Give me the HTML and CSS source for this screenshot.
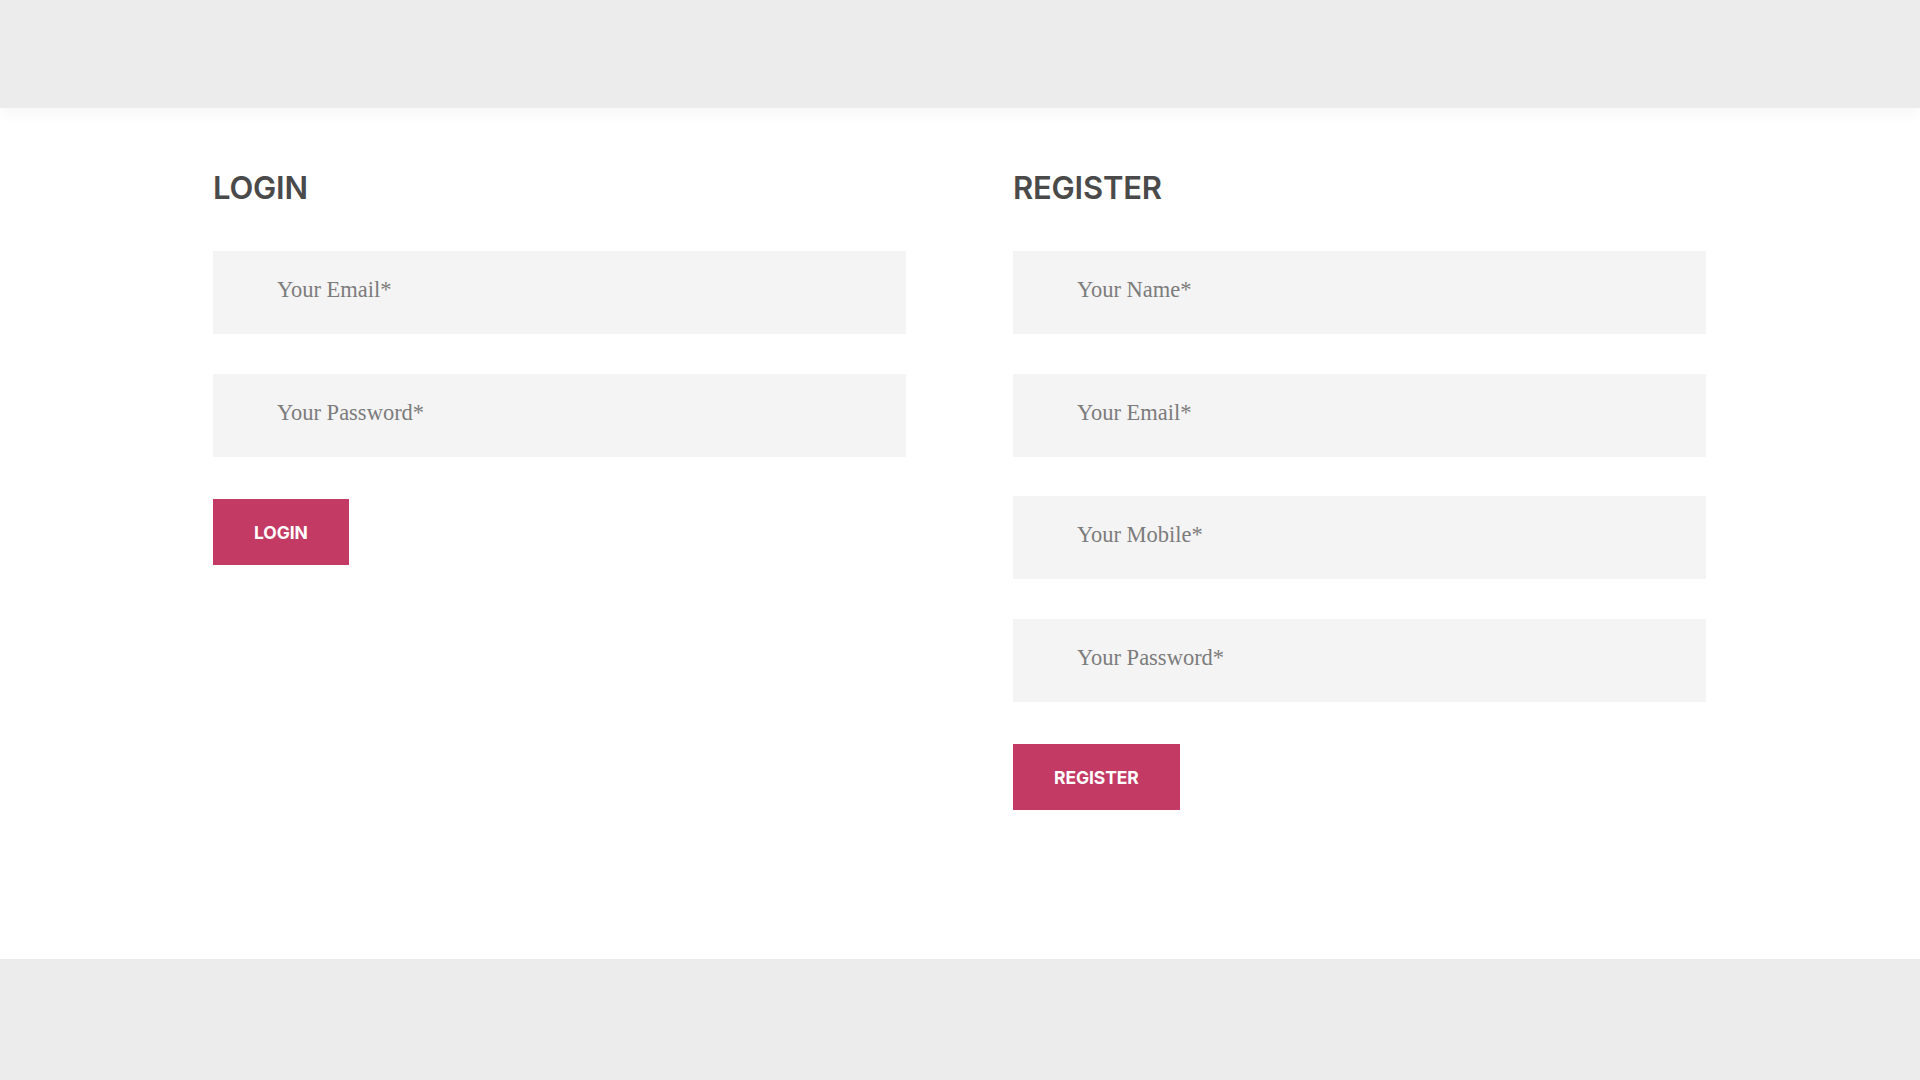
FILE: index.html
```html
<!DOCTYPE html>
<html lang="en">
<head>
<meta charset="utf-8">
<title>Login / Register</title>
<link rel="stylesheet" href="styles.css">
</head>
<body>
<header class="topbar"></header>
<main class="account">
  <div class="account-inner">
    <section class="panel">
      <h2 class="panel-title">LOGIN</h2>
      <form class="panel-form">
        <input class="field" type="email" placeholder="Your Email*">
        <input class="field" type="password" placeholder="Your Password*">
        <button class="btn" type="button">LOGIN</button>
      </form>
    </section>
    <section class="panel">
      <h2 class="panel-title">REGISTER</h2>
      <form class="panel-form">
        <input class="field" type="text" placeholder="Your Name*">
        <input class="field" type="email" placeholder="Your Email*">
        <input class="field" type="tel" placeholder="Your Mobile*">
        <input class="field" type="password" placeholder="Your Password*">
        <button class="btn" type="button">REGISTER</button>
      </form>
    </section>
  </div>
</main>
<footer class="bottombar"></footer>
</body>
</html>
```
FILE: styles.css
```css
* { box-sizing: border-box; }
html, body { margin: 0; padding: 0; }
body {
  background: #ffffff;
  font-family: "Inter", "Liberation Sans", sans-serif;
}
.topbar {
  height: 108px;
  background: #ececec;
  box-shadow: 0 6px 14px rgba(0, 0, 0, 0.035);
  position: relative;
  z-index: 1;
}
.account {
  height: 851px;
  background: #ffffff;
  padding-top: 62px;
}
.account-inner {
  width: 1494px;
  margin: 0 auto;
  display: flex;
  gap: 107px;
}
.panel {
  width: 693px;
}
.panel-title {
  margin: 0 0 45px 0;
  font-family: "Inter", "Liberation Sans", sans-serif;
  font-weight: 600;
  font-size: 31px;
  line-height: 36px;
  color: #4a4a4a;
  letter-spacing: -0.2px;
}
.panel-form {
  display: flex;
  flex-direction: column;
  align-items: flex-start;
}
.field {
  display: block;
  width: 100%;
  height: 83px;
  margin: 0 0 39.5px 0;
  padding: 0 20px 5px 64px;
  border: none;
  outline: none;
  background: #f4f4f4;
  font-family: "Liberation Serif", "DejaVu Serif", serif;
  font-size: 22.5px;
  color: #555;
}
.field::placeholder {
  color: #7c7c7c;
  opacity: 1;
}
.btn {
  height: 66px;
  margin-top: 3px;
  padding: 0 41px;
  border: none;
  background: #c33a64;
  color: #ffffff;
  font-family: "Inter", "Liberation Sans", sans-serif;
  font-weight: 700;
  font-size: 17.5px;
  letter-spacing: -0.1px;
  cursor: pointer;
}
.bottombar {
  height: 121px;
  background: #ececec;
}
```
